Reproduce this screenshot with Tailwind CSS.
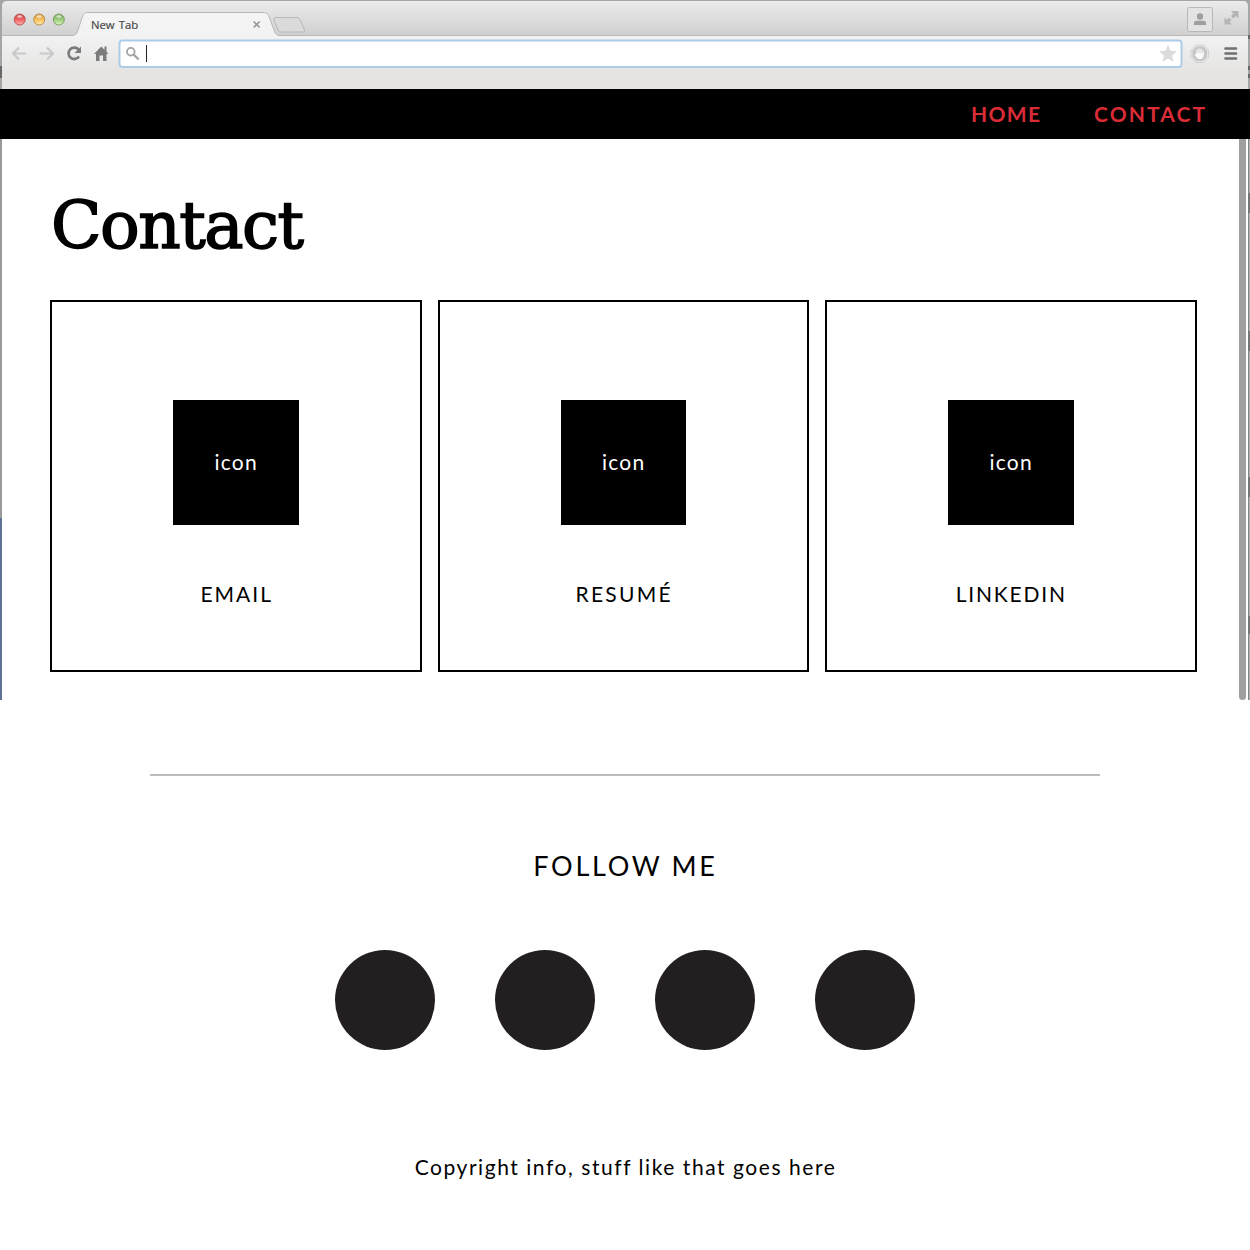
<!DOCTYPE html>
<html lang="en">
<head>
<meta charset="utf-8">
<title>Contact</title>
<script src="https://cdn.jsdelivr.net/npm/@tailwindcss/browser@4"></script>
</head>
<body class="bg-white text-black font-[Lato,sans-serif]">
<div class="relative h-[1250px] w-[1250px] overflow-hidden flex flex-col">

  <!-- browser window chrome -->
  <header class="h-[89px] w-full shrink-0">
    <svg class="block" width="1250" height="89" viewBox="0 0 1250 89">
      <defs>
        <linearGradient id="strip" x1="0" y1="0" x2="0" y2="36" gradientUnits="userSpaceOnUse"><stop offset="0" stop-color="#ececec"/><stop offset="1" stop-color="#cfcfcf"/></linearGradient>
        <linearGradient id="bar" gradientUnits="userSpaceOnUse" x1="0" y1="12" x2="0" y2="72"><stop offset="0" stop-color="#f5f5f5"/><stop offset=".4" stop-color="#f2f2f2"/><stop offset="1" stop-color="#e5e4e3"/></linearGradient>
        <linearGradient id="red" x1="0" y1="0" x2="0" y2="1"><stop offset="0" stop-color="#c94c4c"/><stop offset=".5" stop-color="#ee6262"/><stop offset="1" stop-color="#ffb5b0"/></linearGradient>
        <linearGradient id="amber" x1="0" y1="0" x2="0" y2="1"><stop offset="0" stop-color="#d79a45"/><stop offset=".5" stop-color="#f6bd5c"/><stop offset="1" stop-color="#fff0ae"/></linearGradient>
        <linearGradient id="green" x1="0" y1="0" x2="0" y2="1"><stop offset="0" stop-color="#7bab64"/><stop offset=".5" stop-color="#9acb7c"/><stop offset="1" stop-color="#dcf7bd"/></linearGradient>
      </defs>
      <rect width="1250" height="89" fill="#a5a5a5"/>
      <rect y="66" width="2" height="12" fill="#666"/>
      <path d="M1248 35h2v4h-2zM1248 66h2v4h-2zM1248 74h2v4h-2z" fill="#666"/>
      <path d="M2 89V6Q2 1 7 1H1243Q1248 1 1248 6V89Z" fill="url(#strip)"/>
      <rect x="2" y="36" width="1246" height="53" fill="url(#bar)"/>
      <path d="M72 36C76 35.500 77 33 78 30L82 18C83.500 14 84.500 12.500 88 12.500H263C267 12.500 268 14 269.500 18L274 30C275 33 276 35.500 280 36Z" fill="url(#bar)"/>
      <path d="M2 35.500H72C76 35.500 77 33 78 30L82 18C83.500 14 84.500 12.500 88 12.500H263C267 12.500 268 14 269.500 18L274 30C275 33 276 35.500 280 35.500H1248" fill="none" stroke="#b8b8b8"/>
      <path d="M276 17.500H297Q299 17.500 300 19.500L304.500 30Q305 32 303 32H281Q279 32 278 30L274 20Q273.500 17.500 276 17.500Z" fill="#dadada" stroke="#b8b8b8"/>
      <g stroke-width="1">
        <circle cx="19.700" cy="19.500" r="5.500" fill="url(#red)" stroke="#b75352"/>
        <circle cx="39.200" cy="19.500" r="5.500" fill="url(#amber)" stroke="#b98b49"/>
        <circle cx="58.800" cy="19.500" r="5.500" fill="url(#green)" stroke="#7b9c65"/>
      </g>
      <g fill="#fff" opacity=".65"><ellipse cx="19.700" cy="16.500" rx="2.500" ry="1.200"/><ellipse cx="39.200" cy="16.500" rx="2.500" ry="1.200"/><ellipse cx="58.800" cy="16.500" rx="2.500" ry="1.200"/></g>
      <text x="91" y="28.500" font-family="Open Sans" font-size="11.300" fill="#484848" stroke="#484848" stroke-width=".2" word-spacing="1.200">New Tab</text>
      <path d="M253.700 21.500l6 6M259.700 21.500l-6 6" stroke="#969696" stroke-width="1.700"/>
      <g fill="none" stroke="#c9c9c9" stroke-width="2.200" stroke-linejoin="round">
        <path d="M26 53.500H13M19 47.500L13 53.500L19 59.500"/>
        <path d="M39.500 53.500H53M47 47.500L53 53.500L47 59.500"/>
      </g>
      <path d="M78.500 49.500A5.700 5.700 0 1 0 79 56.500" fill="none" stroke="#7b7b7b" stroke-width="2.700"/>
      <path d="M81 46.500V53H74.500Z" fill="#7b7b7b"/>
      <path d="M101.200 46.500L94 54H96V61H99.500V55.500H103V61H106.500V54H108.500L106.500 51.800V46.500H104.500V49.700Z" fill="#7b7b7b"/>
      <rect x="119.500" y="40.500" width="1062" height="26.500" rx="3" fill="#fff" stroke="#adcce8" stroke-width="2"/>
      <circle cx="130.800" cy="51.700" r="3.800" fill="none" stroke="#a2a2a2" stroke-width="1.800"/>
      <path d="M133.700 54.700L138.700 59.500" stroke="#a2a2a2" stroke-width="2.300"/>
      <path d="M146.500 45V62" stroke="#222"/>
      <path d="M1168 45L1170.500 50.800L1176.800 51.300L1172 55.500L1173.500 61.800L1168 58.500L1162.500 61.800L1164 55.500L1159.200 51.300L1165.500 50.800Z" fill="#dbdbdb"/>
      <path d="M1196 45H1203.500L1208.500 50V57.500L1203.500 62.500H1196L1191 57.500V50Z" fill="#e6e6e6" stroke="#d2d2d2"/>
      <path d="M1196.500 46.500H1203L1207 50.500V57L1203 61H1196.500L1192.500 57V50.500Z" fill="#c6c6c6"/>
      <path d="M1197 54V50.500M1199 53V49M1201 53V49.200M1203 54V50.800" stroke="#f8f8f8" stroke-width="1.300" stroke-linecap="round"/>
      <path d="M1196.400 53H1203.700V56L1202 59H1198.500L1196 57L1194.500 54.800L1195.500 54.300Z" fill="#f8f8f8"/>
      <path d="M1225.500 48.500H1236M1225.500 53.500H1236M1225.500 58.500H1236" stroke="#707070" stroke-width="2.600" stroke-linecap="round"/>
      <rect x="1187.500" y="7.500" width="25" height="24" rx="2" fill="#e3e3e3" stroke="#b9b9b9"/>
      <circle cx="1200" cy="16.500" r="3.200" fill="#9f9f9f"/><path d="M1194 25V23Q1194 20.800 1197 20.800H1203Q1206 20.800 1206 23V25Z" fill="#9f9f9f"/>
      <path d="M1231 11H1238.500V18.500L1236 16L1233.500 18.500L1231 16L1233.500 13.500ZM1224.500 17.500L1227 20L1229 17.500L1231.500 20L1229.500 22L1232 24.500H1224.500Z" fill="#b4b4b4"/>
    </svg>
  </header>

  <nav class="flex h-[50px] shrink-0 items-center justify-end bg-black text-[21px] font-bold leading-[50px] text-[#d92c37]">
    <a class="mr-[53px] w-[70px] whitespace-nowrap tracking-[1.3px]">HOME</a>
    <a class="mr-[44px] w-[112px] whitespace-nowrap tracking-[2.1px]">CONTACT</a>
  </nav>

  <main class="flex h-[561px] shrink-0">
    <div class="flex w-[2px] flex-col">
      <div class="h-[379px] bg-[#999999]"></div>
      <div class="h-[182px] bg-[#607397]"></div>
    </div>
    <div class="ml-[48px] w-[1146.500px]">
      <h1 class="mt-[47px] h-[114px] whitespace-nowrap pl-px font-[DejaVu_Serif,serif] text-[66px] leading-[80px] tracking-[-1.5px] [-webkit-text-stroke:1.6px_black]">Contact</h1>
      <div class="grid grid-cols-3 gap-[16px]">
        <section class="flex h-[371.500px] flex-col items-center border-2 border-black pt-[98px]">
          <div class="flex h-[125px] w-[125.500px] justify-center bg-black pl-px text-[21px] leading-[124px] tracking-[1.200px] text-white">icon</div>
          <h2 class="mt-[54px] pl-[2px] text-[21px] leading-[30px] tracking-[2px]">EMAIL</h2>
        </section>
        <section class="flex h-[371.500px] flex-col items-center border-2 border-black pt-[98px]">
          <div class="flex h-[125px] w-[125.500px] justify-center bg-black pl-px text-[21px] leading-[124px] tracking-[1.200px] text-white">icon</div>
          <h2 class="mt-[54px] pl-[2px] text-[21px] leading-[30px] tracking-[2.300px]">RESUMÉ</h2>
        </section>
        <section class="flex h-[371.500px] flex-col items-center border-2 border-black pt-[98px]">
          <div class="flex h-[125px] w-[125.500px] justify-center bg-black pl-px text-[21px] leading-[124px] tracking-[1.200px] text-white">icon</div>
          <h2 class="mt-[54px] pl-px text-[21px] leading-[30px] tracking-[1.800px]">LINKEDIN</h2>
        </section>
      </div>
    </div>
    <div class="ml-auto mr-px h-[561px] w-[7px] rounded-b-full bg-[#9f9f9f]"></div>
    <svg class="ml-px block" width="2" height="561" viewBox="0 0 2 561">
      <rect width="2" height="561" fill="#b0b0b0"/><rect width="1" height="561" fill="#858585"/>
      <path d="M0 54h2v20H0zM0 192h2v20H0zM0 338h2v20H0zM0 477h2v18H0z" fill="#777"/>
    </svg>
  </main>

  <footer class="flex flex-col items-center">
    <hr class="mt-[74px] h-[2px] w-[950px] border-0 bg-[#bcbcbc]">
    <h2 class="mt-[70px] whitespace-nowrap pl-px text-[27px] leading-[40px] tracking-[2.700px]">FOLLOW ME</h2>
    <div class="mt-[64px] flex gap-[60px]">
      <div class="size-[100px] rounded-full bg-[#231f20]"></div>
      <div class="size-[100px] rounded-full bg-[#231f20]"></div>
      <div class="size-[100px] rounded-full bg-[#231f20]"></div>
      <div class="size-[100px] rounded-full bg-[#231f20]"></div>
    </div>
    <p class="mt-[102px] whitespace-nowrap pl-px text-[21px] leading-[30px] tracking-[1.550px]">Copyright info, stuff like that goes here</p>
  </footer>
</div>
</body>
</html>
